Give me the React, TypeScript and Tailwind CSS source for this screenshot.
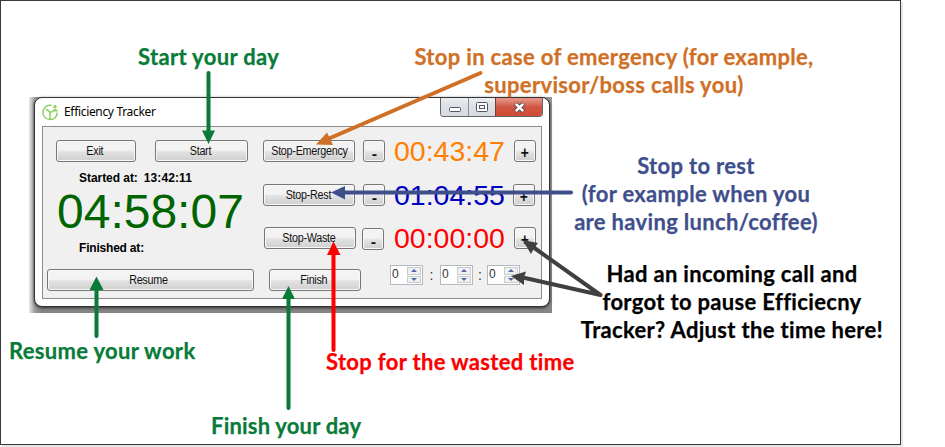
import type { ReactNode } from "react";

const sans = "font-['Liberation_Sans',Arial,sans-serif]";

function Button({ children, className = "" }: { children: ReactNode; className?: string }) {
  return (
    <button
      className={`flex h-[22px] shrink-0 items-center justify-center whitespace-nowrap rounded-[3px] border border-[#777] bg-linear-to-b from-[#f3f3f3] from-45% via-[#e2e2e2] via-55% to-[#cfcfcf] text-[12.5px] leading-none tracking-[-0.3px] text-[#111] shadow-[inset_0_0_0_1px_#f8f8f8] ${className}`}
    >
      <span className="inline-block scale-x-[.86]">{children}</span>
    </button>
  );
}

function Sign({ plus = false, className = "" }: { plus?: boolean; className?: string }) {
  return (
    <Button className={`w-[22px] font-bold ${className}`}>
      <span className={plus ? "block pt-[4px] text-[16px]" : "block scale-x-125 pt-[4px] text-[15px]"}>{plus ? "+" : "-"}</span>
    </Button>
  );
}

function Clock({ value, className }: { value: string; className: string }) {
  return <span className={`w-[112px] shrink-0 whitespace-nowrap pl-px text-[28.5px] leading-[22px] ${className}`}>{value}</span>;
}

function Spinner({ className = "" }: { className?: string }) {
  return (
    <div className={`flex h-[20px] w-[33px] shrink-0 justify-between border border-[#b4b8bc] bg-white ${className}`}>
      <span className="pl-px text-[12px] leading-[16px] text-[#333]">0</span>
      <div className="my-px mr-px flex w-[14px] flex-col gap-px">
        <div className="flex flex-1 items-center justify-center border border-[#c8cbd0] bg-[#f0f0f0]">
          <svg width="6" height="3" viewBox="0 0 6 3"><path d="M0 3 3 0 6 3Z" fill="#5265a4" /></svg>
        </div>
        <div className="flex flex-1 items-center justify-center border border-[#c8cbd0] bg-[#f0f0f0]">
          <svg width="6" height="3" viewBox="0 0 6 3"><path d="M0 0 3 3 6 0Z" fill="#5265a4" /></svg>
        </div>
      </div>
    </div>
  );
}

function TitleBar() {
  return (
    <div className="flex h-[28px] justify-between pl-[7px] pr-[6px]">
      <div className="flex items-center gap-[5px]">
        <svg width="17" height="17" viewBox="0 0 17 17" fill="none" stroke="#8fcf62" strokeWidth="1.5">
          <path d="M9.500 1.300A7.200 7.200 0 1 0 15.300 8.500" />
          <path d="M3.500 5.500Q6.500 5.500 8 8.800V15M8 9.500Q8.500 7.500 11 7.500" />
          <path d="M13 1a1.700 1.700 0 1 1 0 3.400 1.700 1.700 0 0 1 0-3.400ZM10 7.500c0-3.500 6-3.500 6 0Z" fill="#8fcf62" stroke="none" />
        </svg>
        <span className="font-['Noto_Sans',sans-serif] text-[12px] tracking-[-0.33px] text-black">Efficiency Tracker</span>
      </div>
      <div className="flex h-[19px] w-[103px] overflow-hidden rounded-b-[4px] border border-t-0 border-[#60646c]">
        <div className="flex w-[28px] items-center justify-center border-r border-[#8b8f98] bg-linear-to-b from-[#eceef0] via-[#dcdfe3] to-[#d7dade]">
          <svg width="12" height="5" className="mt-[5px]"><rect x=".5" y=".5" width="11" height="4" rx="1" fill="white" stroke="#505668" /></svg>
        </div>
        <div className="flex w-[27px] items-center justify-center border-r border-[#793c35] bg-linear-to-b from-[#eceef0] via-[#dcdfe3] to-[#d7dade]">
          <svg width="12" height="10" fill="white" stroke="#505668"><rect x=".5" y=".5" width="11" height="9" rx="1" /><rect x="3.5" y="3.5" width="5" height="3" /></svg>
        </div>
        <div className="flex flex-1 items-center justify-center bg-linear-to-b from-[#e58f80] from-10% via-[#cf5542] via-50% to-[#d24a33]">
          <svg width="13" height="11" viewBox="0 0 13 11"><path d="M2.5 1.5 10.5 9.5M10.5 1.5 2.5 9.5" stroke="#5b4a52" strokeWidth="4.4" /><path d="M2.8 1.8 10.2 9.2M10.2 1.8 2.8 9.2" stroke="white" strokeWidth="2.6" /></svg>
        </div>
      </div>
    </div>
  );
}

function TrackerWindow() {
  return (
    <div className={`h-[216px] w-[523px] bg-linear-to-b from-[#999] via-[#999] to-[#858585] ${sans}`}>
      <div className="h-full w-full bg-[linear-gradient(90deg,#e8e8e8_0,#9a9a9a_6px,transparent_12px)] pl-[5px]">
        <div className="h-[210px] w-[516px] rounded-[8px] border-[1.5px] border-[#333] bg-white shadow-[0_1px_3px_#333]">
          <TitleBar />
          <div className="ml-[7px] flex h-[173px] w-[500px] border border-[#8a8a8a] bg-[#f0f0f0]">
            <div className="flex w-[220px] shrink-0 flex-col pl-[4px] pt-[13px]">
              <div className="flex pl-[9px]">
                <Button className="w-[80px] pr-[2px]">Exit</Button>
                <Button className="ml-[19px] w-[93px] pr-[2px]">Start</Button>
              </div>
              <div className="mt-[9px] whitespace-nowrap pl-[32px] text-[12px] font-bold leading-[14px] text-black">
                <span className="tracking-[-0.05px]">Started at:</span>
                <span className="ml-[6px] tracking-[0.1px]">13:42:11</span>
              </div>
              <div className="mt-[5px] whitespace-nowrap pl-[10px] text-[48px] leading-[44px] text-[#006400]">04:58:07</div>
              <div className="mt-[7px] whitespace-nowrap pl-[32px] text-[12px] font-bold leading-[14px] tracking-[-0.2px] text-black">Finished at:</div>
              <Button className="mt-[14px] w-[207px] pr-[4px]">Resume</Button>
            </div>
            <div className="flex flex-col pt-[13px]">
              <div className="flex items-start">
                <Button className="w-[92px]">Stop-Emergency</Button>
                <Sign className="ml-[8px]" />
                <Clock value="00:43:47" className="ml-[8px] text-[#ff8000]" />
                <Sign plus className="ml-[9px]" />
              </div>
              <div className="mt-[22px] flex items-start">
                <Button className="w-[92px] pr-[2px]">Stop-Rest</Button>
                <Sign className="ml-[8px]" />
                <Clock value="01:04:55" className="ml-[8px] text-[#0000bf]" />
                <Sign plus className="ml-[8px]" />
              </div>
              <div className="mt-[21px] flex items-start pl-px">
                <Button className="w-[92px] pr-[2px]">Stop-Waste</Button>
                <Sign className="ml-[6px] mt-px" />
                <Clock value="00:00:00" className="ml-[9px] text-[#ff0000]" />
                <Sign plus className="ml-[9px]" />
              </div>
              <div className="mt-[13px] flex items-start pl-[6px]">
                <Button className="mt-[6px] w-[92px] pr-[3px]">Finish</Button>
                <Spinner className="ml-[29px] mt-[2px]" />
                <span className="w-[17px] pt-[3px] text-center text-[14px] leading-[18px] text-[#333]">:</span>
                <Spinner className="mt-[2px]" />
                <span className="w-[14px] pt-[3px] text-center text-[14px] leading-[18px] text-[#333]">:</span>
                <Spinner className="mt-[2px]" />
              </div>
            </div>
          </div>
        </div>
      </div>
    </div>
  );
}

function Note({ children, className }: { children: ReactNode; className: string }) {
  return <div className={`absolute whitespace-nowrap text-center ${className}`}>{children}</div>;
}

function Arrows() {
  return (
    <svg className="absolute left-0 top-0" width="900" height="445" fill="none" strokeWidth="4" strokeLinecap="round">
      <g stroke="#087b39">
        <path d="M208.500 73V132M96.500 336V288M288.500 408V297" />
        <path d="M208.500 144 202 130.500H215ZM96.500 276.500 89.500 290H103.500ZM288.500 286 282 299H295Z" fill="#087b39" stroke="none" />
      </g>
      <path d="M480.500 73 329 138.500" stroke="#cf7026" />
      <path d="M316 144.500 327 132.500 333 145Z" fill="#cf7026" />
      <path d="M571 192.500H343" stroke="#3f4f8c" />
      <path d="M331 192.500 345 186V199.500Z" fill="#3f4f8c" />
      <path d="M333.500 350V252" stroke="#fa0000" />
      <path d="M333.500 241.500 327 255H340.500Z" fill="#fa0000" />
      <path d="M600.500 295 533 247M600.500 295 525 278" stroke="#404040" />
      <path d="M522.500 240 538 243 534.500 247.500 531 254ZM511 276 526 271.500 524 278 524 285Z" fill="#404040" />
    </svg>
  );
}

export default function App() {
  return (
    <main className="h-[447px] w-[945px] overflow-hidden bg-white">
      <section className="relative h-[445px] w-[901px] border border-[#3b393d] bg-white pl-[28px] pt-[96px] shadow-[2px_2px_0_#e5e5e5]">
        <TrackerWindow />
        <div className="absolute -left-px -top-px h-[445px] w-[901px] font-['Lato',Carlito,sans-serif] text-[22px] font-bold leading-[28px] tracking-[0.33px] [-webkit-text-stroke:0.25px_currentColor] [font-variant-ligatures:none]">
          <Note className="left-[138px] top-[43px] text-[#087b39]">Start your day</Note>
          <Note className="left-[414px] top-[43px] w-[400px] text-[#cf7026]"><div>Stop in case of emergency (for example,</div><div>supervisor/boss calls you)</div></Note>
          <Note className="left-[571px] top-[152px] w-[250px] text-[#3f4f8c]">Stop to rest<br />(for example when you<br />are having lunch/coffee)</Note>
          <Note className="left-[580px] top-[260px] w-[304px] text-black">Had an incoming call and<br />forgot to pause Efficiecny<br />Tracker? Adjust the time here!</Note>
          <Note className="left-[9px] top-[337px] text-[#087b39]">Resume your work</Note>
          <Note className="left-[326px] top-[348px] text-[#fa0000]">Stop for the wasted time</Note>
          <Note className="left-[211px] top-[412px] tracking-[0.2px] text-[#087b39]">Finish your day</Note>
          <Arrows />
        </div>
      </section>
    </main>
  );
}
